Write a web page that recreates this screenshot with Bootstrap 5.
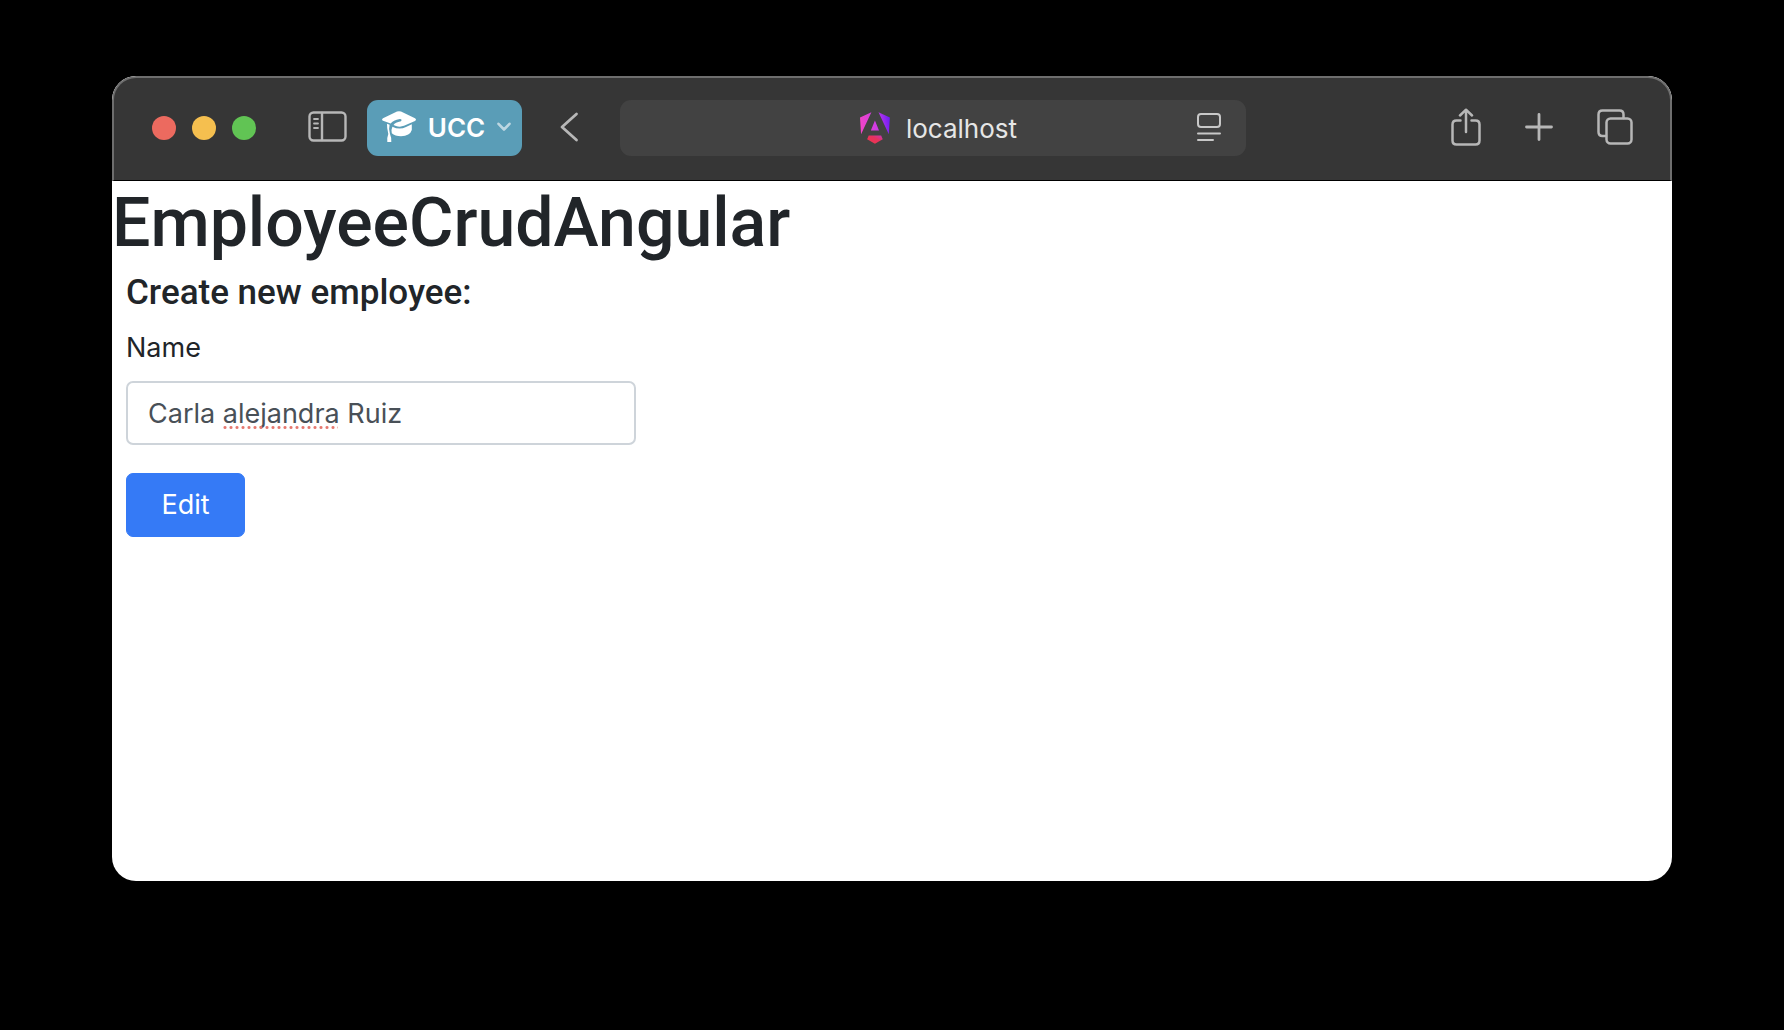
<!DOCTYPE html>
<html lang="en">
<head>
<meta charset="utf-8">
<meta name="viewport" content="width=device-width, initial-scale=1">
<title>EmployeeCrudAngular</title>
<link href="https://cdn.jsdelivr.net/npm/bootstrap@5.3.0/dist/css/bootstrap.min.css" rel="stylesheet">
<style>
  body { background: #000; font-family: Inter, "Liberation Sans", sans-serif; font-size: 26px; }
  .desk { padding: 76px 112px 149px; }
  .win { background: #fff; border-radius: 24px; overflow: hidden; }
  .titlebar { height: 105px; background: #363636; border: 2px solid #6e6e6e; border-bottom: 1px solid #000; border-radius: 24px 24px 0 0; padding: 0 37px 2px 38px; color: #b7b7b7; }
  .titlebar button { background: none; border: 0; padding: 0 0 2px; color: inherit; display: flex; align-items: center; }
  .titlebar svg { display: block; fill: none; stroke: currentColor; stroke-linecap: round; stroke-linejoin: round; }
  .light { width: 24px; height: 24px; border-radius: 50%; }
  .light-red { background: #ec6a5f; }
  .light-amber { background: #f5bf4f; }
  .light-green { background: #61c454; }
  .sidebar-btn { margin-left: 52px; margin-right: 20px; }
  .titlebar .profile-btn { width: 155px; height: 56px; border-radius: 11px; background: #5a9db7; color: #fff; font-weight: 600; font-size: 26px; padding: 0 11px 2px 15px; }
  .back-btn { margin-left: 38px; margin-right: 41px; }
  .address { width: 626px; height: 56px; border-radius: 11px; background: #424242; color: #e6e6e6; font-size: 26px; padding: 0 25px 0 60px; }
  .address button { color: #c8c8c8; }
  .right-tools { gap: 44px; }
  .heading-app, .heading-form { font-family: Roboto, Inter, sans-serif; font-weight: 500; }
  .heading-app { font-size: 68px; line-height: 80px; padding-top: 2px; }
  .heading-form { font-size: 35px; line-height: 40px; margin-bottom: 16px; }
  .page { color: #212529; }
  .form-area { padding: 2px 0 0 14px; }
  .form-label { font-size: 27px; line-height: 38px; margin-bottom: 14px; }
  .name-box { width: 510px; margin-bottom: 28px; }
  .name-box .form-control { height: 64px; font-size: 27px; padding: 0 20px; color: #495057; border: 2px solid #ced4da; border-radius: 7px; }
  .misspelt { left: 96px; top: 45px; width: 116px; height: 3px; background: radial-gradient(circle, #e5786f 1px, #e5786f 1px, transparent 2px) 0 0 / 6px 3px repeat-x; }
  .edit-btn { width: 119px; height: 64px; font-size: 27px; border-radius: 7px; --bs-btn-bg: #357af6; --bs-btn-border-color: #357af6; }
</style>
<script src="https://cdn.jsdelivr.net/npm/bootstrap@5.3.0/dist/js/bootstrap.bundle.min.js"></script>
</head>
<body>
<div class="desk d-flex min-vh-100">
  <div class="win flex-grow-1">
    <header class="titlebar d-flex align-items-center">
      <div class="d-flex gap-3">
        <span class="light light-red"></span>
        <span class="light light-amber"></span>
        <span class="light light-green"></span>
      </div>
      <button class="sidebar-btn" aria-label="Show sidebar">
        <svg width="39" height="32" viewBox="0 0 39 32" stroke-width="2.4"><rect x="1.5" y="1.5" width="36" height="28" rx="4"/><path d="M14 2v27"/><path d="M6 8h4M6 12.500h4M6 17h4" stroke-width="1.800"/></svg>
      </button>
      <button class="profile-btn justify-content-between">
        <svg width="34" height="32" viewBox="0 0 34 32"><g fill="#fff" stroke="none"><path d="M15 .6Q17 -.2 19 .6L33 7.200Q35 8.600 33 9.900L22 14.800Q18 16.400 14 14.900L11.500 13.900Q13 11.600 19 10.200Q20.500 8.200 17.800 8.100Q11 9.300 8.700 12.600L1 9.800Q-.9 8.500 1 7.200Z"/><path d="M10.400 15.700Q17.500 19.300 24 16L29.800 13.300V19Q28 25 19 25.200Q13 25.200 9.800 22.200Q9 18.400 10.400 15.700Z"/><path d="M5 12.800L7.600 13.700Q6.400 17.500 8 23Q9.400 26 9.300 31H5.300Q5 26 6.300 23Q4.800 17 5 12.800Z"/></g></svg>
        <span>UCC</span>
        <svg width="14" height="10" viewBox="0 0 14 10" stroke-width="2.600" opacity=".6"><path d="M1.500 1.800L7 7.500L12.500 1.800"/></svg>
      </button>
      <button class="back-btn" aria-label="Back">
        <svg width="19" height="30" viewBox="0 0 19 30" stroke-width="2.800"><path d="M16.500 2L2 15L16.500 28"/></svg>
      </button>
      <div class="address d-flex align-items-center">
        <div class="d-flex align-items-center justify-content-center gap-3 flex-grow-1">
          <svg width="30" height="32" viewBox="0 0 223 236"><defs>
            <linearGradient id="ng" x1="0" y1="0.300" x2="1" y2="0.200"><stop offset="0" stop-color="#f045c8"/><stop offset=".55" stop-color="#cc3be6"/><stop offset="1" stop-color="#6a1cf4"/></linearGradient>
            <linearGradient id="ngr" x1="0" y1="1" x2="1" y2="0"><stop offset="0" stop-color="#f0364a"/><stop offset=".6" stop-color="#e5325f"/><stop offset="1" stop-color="#c535b8"/></linearGradient></defs>
            <path stroke="none" fill="url(#ng)" d="m222.077 39.192-8.019 125.923L137.387 0l84.690 39.192ZM111.039 62.675l30.357 73.803H80.681l30.358-73.803ZM7.937 165.115 0 39.192 84.690 0 7.937 165.115Z"/>
            <path stroke="none" fill="url(#ngr)" d="m168.972 202.017-57.933 33.056-57.934-33.056 11.783-28.556h92.301l11.783 28.556Z"/></svg>
          <span>localhost</span>
        </div>
        <button aria-label="Reader view">
          <svg width="24" height="30" viewBox="0 0 24 30" stroke-width="2"><rect x="1" y="2" width="22" height="13" rx="3"/><path d="M1 21.500h22M1 28h15"/></svg>
        </button>
      </div>
      <div class="right-tools d-flex align-items-center ms-auto">
        <button aria-label="Share">
          <svg width="30" height="38" viewBox="0 0 30 38" stroke-width="2.500"><path d="M9.500 12.500H5.500Q1.500 12.500 1.500 16.500V32.500Q1.500 36.500 5.500 36.500H24.500Q28.500 36.500 28.500 32.500V16.500Q28.500 12.500 24.500 12.500H20.500M15 24V2M9 7.500L15 1.700L21 7.500"/></svg>
        </button>
        <button aria-label="New tab">
          <svg width="28" height="28" viewBox="0 0 28 28" stroke-width="2.800"><path d="M14 1.500v25M1.500 14h25"/></svg>
        </button>
        <button aria-label="Tab overview">
          <svg width="36" height="36" viewBox="0 0 36 36" stroke-width="2.500"><rect x="9.500" y="9.500" width="25" height="25" rx="4"/><path d="M9 27H5.500Q1.500 27 1.500 23V5.500Q1.500 1.500 5.500 1.500H22.500Q26.500 1.500 26.500 5.500V9"/></svg>
        </button>
      </div>
    </header>
    <main class="page">
      <h1 class="heading-app mb-2">EmployeeCrudAngular</h1>
      <form class="form-area">
        <h2 class="heading-form">Create new employee:</h2>
        <label class="form-label d-block" for="name">Name</label>
        <div class="name-box position-relative">
          <input class="form-control" id="name" type="text" value="Carla alejandra Ruiz" spellcheck="false">
          <span class="misspelt position-absolute"></span>
        </div>
        <button type="button" class="btn btn-primary edit-btn">Edit</button>
      </form>
    </main>
  </div>
</div>
</body>
</html>
